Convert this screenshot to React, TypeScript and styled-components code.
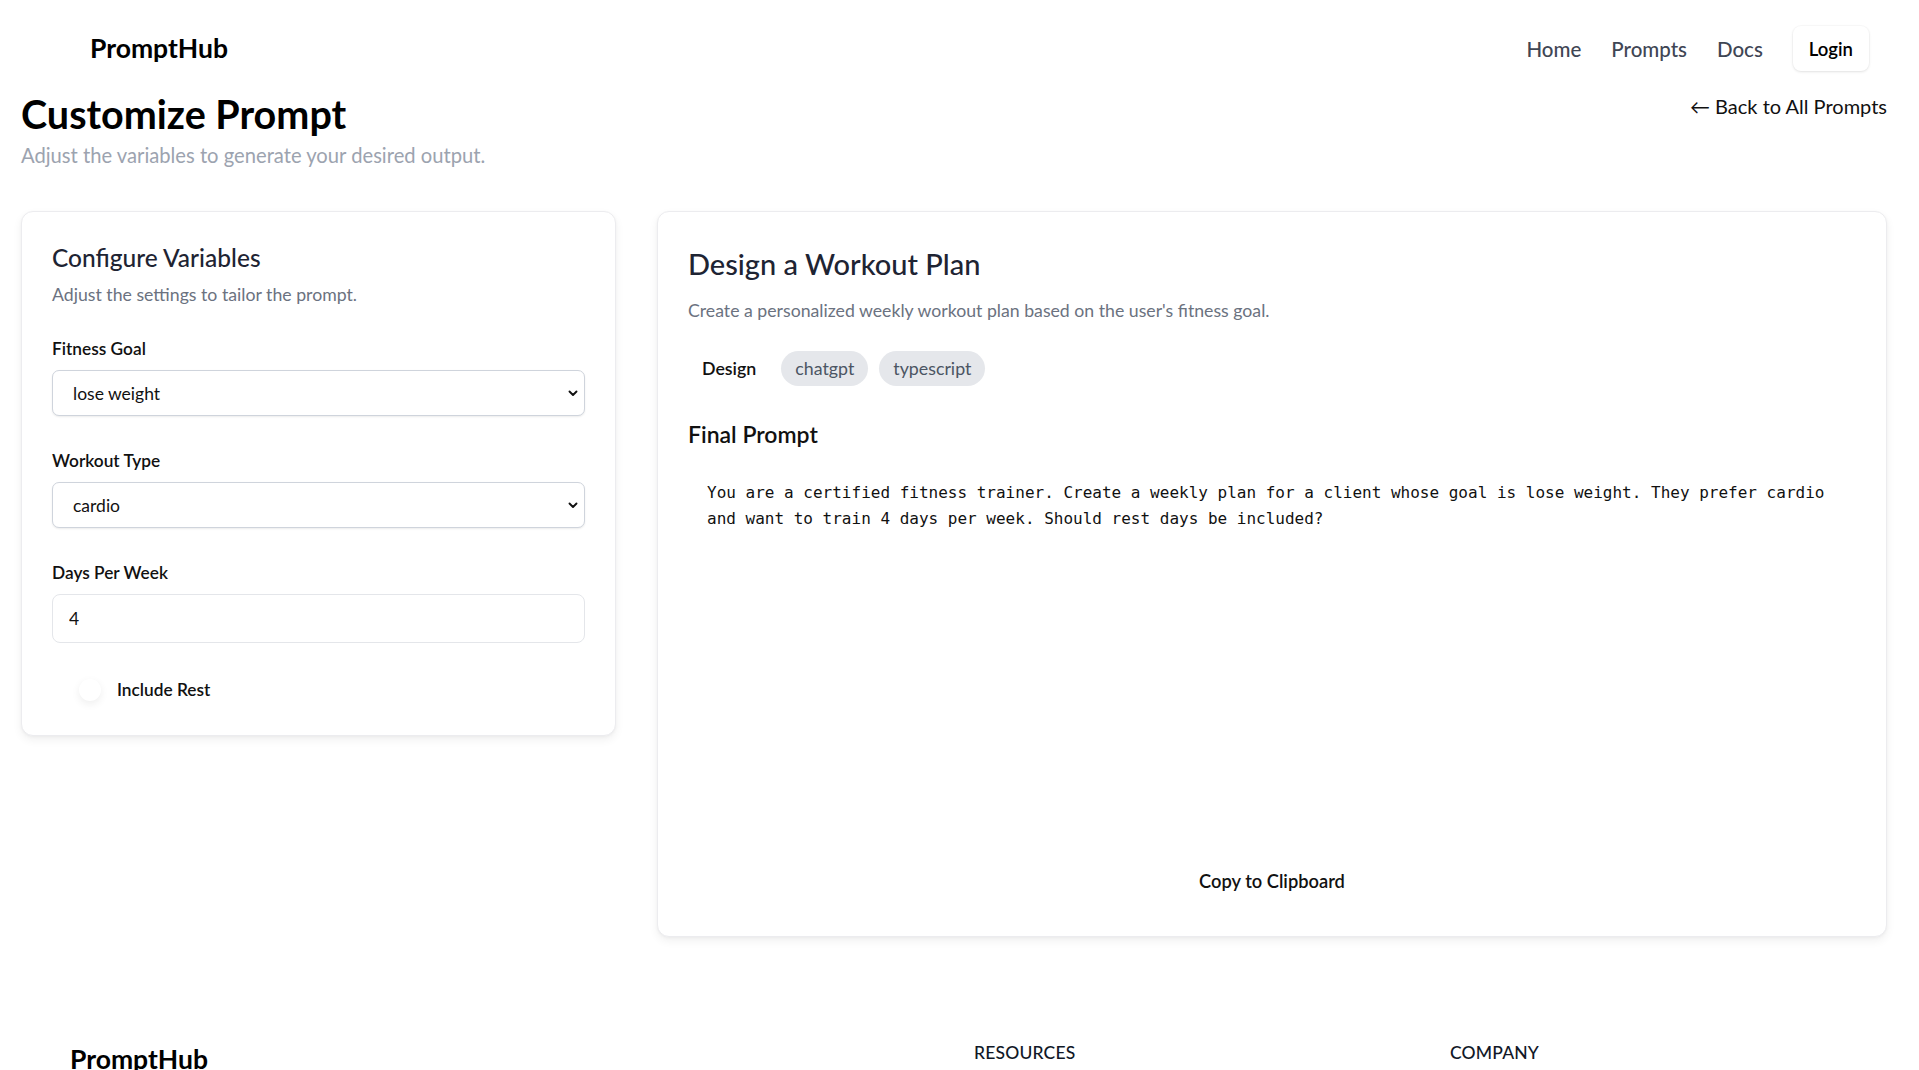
import React, { useState } from "react";
import styled, { createGlobalStyle } from "styled-components";

const Global = createGlobalStyle`
  html, body { margin: 0; padding: 0; background: #ffffff; }
  body { font-family: Lato, "Open Sans", "Noto Sans", sans-serif; color: #111827; }
  * { box-sizing: border-box; }
`;

const Nav = styled.header`
  display: flex;
  align-items: center;
  justify-content: space-between;
  padding: 26px 50px 20px 90px;
`;

const Brand = styled.div<{ $size?: number }>`
  font-size: ${(p) => p.$size ?? 26.5}px;
  font-weight: 700;
  color: #000;
  line-height: 1.25;
`;

const NavLinks = styled.nav`
  display: flex;
  align-items: center;
  gap: 30px;
`;

const NavLink = styled.a`
  font-size: 20.5px;
  font-weight: 500;
  color: #3f4654;
  text-decoration: none;
`;

const LoginButton = styled.button`
  height: 45px;
  padding: 0 16px;
  border: none;
  border-radius: 8px;
  background: #fff;
  box-shadow: 0 1px 3px rgba(0, 0, 0, 0.1), 0 0 0 1px rgba(0, 0, 0, 0.02);
  font-family: inherit;
  font-size: 18.5px;
  font-weight: 600;
  color: #000;
`;

const Main = styled.main`
  padding: 0 32px 62px 21px;
`;

const HeaderRow = styled.div`
  display: flex;
  justify-content: space-between;
  align-items: flex-start;
`;

const PageTitle = styled.h1`
  margin: 0;
  font-size: 39.5px;
  line-height: 46px;
  font-weight: 700;
  color: #000;
`;

const PageSubtitle = styled.p`
  margin: 5px 0 0;
  font-size: 20.2px;
  line-height: 27px;
  color: #9ca3af;
`;

const BackLink = styled.a`
  margin-top: 2px;
  font-size: 20px;
  line-height: 27px;
  color: #111;
  text-decoration: none;
`;

const Grid = styled.div`
  display: grid;
  grid-template-columns: 595px 1fr;
  gap: 41px;
  align-items: start;
  margin-top: 42px;
`;

const Card = styled.section<{ $pb: number }>`
  background: #fff;
  border: 1px solid #ececef;
  border-radius: 12px;
  box-shadow: 0 4px 10px rgba(0, 0, 0, 0.06), 0 1px 3px rgba(0, 0, 0, 0.04);
  padding: 30px 30px ${(p) => p.$pb}px;
  display: flex;
  flex-direction: column;
`;

const CardTitle = styled.h2<{ $size: number; $lh: number }>`
  margin: 0;
  font-size: ${(p) => p.$size}px;
  line-height: ${(p) => p.$lh}px;
  font-weight: 500;
  color: #1e2433;
`;

const CardText = styled.p<{ $mt: number }>`
  margin: ${(p) => p.$mt}px 0 0;
  font-size: 17.7px;
  line-height: 25.5px;
  color: #6b7280;
`;

const Fields = styled.div`
  display: flex;
  flex-direction: column;
  gap: 31.5px;
  margin-top: 28px;
`;

const Field = styled.div`
  display: flex;
  flex-direction: column;
  gap: 9px;
`;

const Label = styled.label`
  font-size: 17.3px;
  line-height: 25.5px;
  font-weight: 600;
  color: #111;
`;

const SelectWrap = styled.div`
  position: relative;
`;

const Select = styled.select`
  width: 100%;
  height: 46px;
  appearance: none;
  padding: 0 40px 0 20px;
  border: 1px solid #cfd4dc;
  border-radius: 7px;
  background: #fff;
  box-shadow: 0 1px 2px rgba(0, 0, 0, 0.08);
  font-family: inherit;
  font-size: 17.5px;
  color: #111;
`;

const Chevron = styled.svg`
  position: absolute;
  right: 6px;
  top: 50%;
  transform: translateY(-50%);
  pointer-events: none;
`;

const TextInput = styled.input`
  width: 100%;
  height: 49px;
  padding: 0 16px;
  border: 1px solid #e4e6ea;
  border-radius: 8px;
  background: #fff;
  font-family: inherit;
  font-size: 17.5px;
  color: #111;
  outline: none;
`;

const SwitchRow = styled.div`
  display: flex;
  align-items: center;
  gap: 16px;
  height: 30px;
  padding-left: 27px;
`;

const SwitchThumb = styled.span`
  width: 22px;
  height: 22px;
  border-radius: 50%;
  background: #fff;
  box-shadow: 0 3px 8px rgba(0, 0, 0, 0.07);
`;

const Tags = styled.div`
  display: flex;
  gap: 11px;
  margin-top: 27px;
`;

const Tag = styled.span<{ $plain?: boolean }>`
  display: inline-flex;
  align-items: center;
  height: 35px;
  padding: 0 14px;
  border-radius: 18px;
  background: ${(p) => (p.$plain ? "transparent" : "#e5e7eb")};
  color: ${(p) => (p.$plain ? "#111" : "#4b5563")};
  font-weight: ${(p) => (p.$plain ? 600 : 400)};
  font-size: 17.8px;
`;

const SectionTitle = styled.h3`
  margin: 33px 0 0;
  font-size: 23px;
  line-height: 30px;
  font-weight: 600;
  color: #111;
`;

const Pre = styled.pre`
  margin: 15px 0 0;
  padding: 16px 19px;
  min-height: 395px;
  font-family: "DejaVu Sans Mono", "Liberation Mono", monospace;
  font-size: 16px;
  line-height: 26px;
  color: #111;
  white-space: pre-wrap;
  word-break: normal;
`;

const CopyButton = styled.button`
  align-self: center;
  height: 44px;
  padding: 0 16px;
  border: none;
  background: transparent;
  font-family: inherit;
  font-size: 18.3px;
  font-weight: 600;
  color: #111;
`;

const Footer = styled.footer`
  padding: 42px 70px 60px;
`;

const FooterGrid = styled.div`
  display: grid;
  grid-template-columns: 856px 428px 428px;
  gap: 48px;
`;

const FooterCol = styled.div<{ $pt?: number }>`
  display: flex;
  flex-direction: column;
  gap: 14px;
  padding-top: ${(p) => p.$pt ?? 0}px;
`;

const FooterHeading = styled.h4`
  margin: 0;
  font-size: 17.5px;
  line-height: 24px;
  font-weight: 500;
  letter-spacing: 0.01em;
  text-transform: uppercase;
  color: #111827;
`;

const FooterLink = styled.a`
  font-size: 15px;
  color: #6b7280;
  text-decoration: none;
`;

const FooterNote = styled.p`
  margin: 0;
  font-size: 15px;
  line-height: 24px;
  color: #6b7280;
  max-width: 380px;
`;

const Copyright = styled.div`
  margin-top: 48px;
  padding-top: 24px;
  border-top: 1px solid #eef0f3;
  font-size: 14px;
  color: #9ca3af;
`;

export default function App() {
  const [goal, setGoal] = useState("lose weight");
  const [type, setType] = useState("cardio");
  const [days, setDays] = useState("4");

  const prompt = `You are a certified fitness trainer. Create a weekly plan for a client whose goal is ${goal}. They prefer ${type} and want to train ${days} days per week. Should rest days be included?`;

  const chevron = (
    <Chevron width="12" height="12" viewBox="0 0 12 12">
      <path d="M2.5 4.5 L6 8 L9.5 4.5" fill="none" stroke="#111" strokeWidth="1.9" strokeLinecap="round" strokeLinejoin="round" />
    </Chevron>
  );

  return (
    <>
      <Global />
      <Nav>
        <Brand>PromptHub</Brand>
        <NavLinks>
          <NavLink href="#">Home</NavLink>
          <NavLink href="#">Prompts</NavLink>
          <NavLink href="#">Docs</NavLink>
          <LoginButton>Login</LoginButton>
        </NavLinks>
      </Nav>
      <Main>
        <HeaderRow>
          <div>
            <PageTitle>Customize Prompt</PageTitle>
            <PageSubtitle>Adjust the variables to generate your desired output.</PageSubtitle>
          </div>
          <BackLink href="#">← Back to All Prompts</BackLink>
        </HeaderRow>
        <Grid>
          <Card $pb={30}>
            <CardTitle $size={24.5} $lh={31}>Configure Variables</CardTitle>
            <CardText $mt={9}>Adjust the settings to tailor the prompt.</CardText>
            <Fields>
              <Field>
                <Label>Fitness Goal</Label>
                <SelectWrap>
                  <Select value={goal} onChange={(e) => setGoal(e.target.value)}>
                    <option>lose weight</option>
                    <option>build muscle</option>
                    <option>improve endurance</option>
                  </Select>
                  {chevron}
                </SelectWrap>
              </Field>
              <Field>
                <Label>Workout Type</Label>
                <SelectWrap>
                  <Select value={type} onChange={(e) => setType(e.target.value)}>
                    <option>cardio</option>
                    <option>strength</option>
                    <option>yoga</option>
                  </Select>
                  {chevron}
                </SelectWrap>
              </Field>
              <Field>
                <Label>Days Per Week</Label>
                <TextInput value={days} onChange={(e) => setDays(e.target.value)} />
              </Field>
              <SwitchRow>
                <SwitchThumb />
                <Label>Include Rest</Label>
              </SwitchRow>
            </Fields>
          </Card>
          <Card $pb={33}>
            <CardTitle $size={29} $lh={43}>Design a Workout Plan</CardTitle>
            <CardText $mt={13}>Create a personalized weekly workout plan based on the user's fitness goal.</CardText>
            <Tags>
              <Tag $plain>Design</Tag>
              <Tag>chatgpt</Tag>
              <Tag>typescript</Tag>
            </Tags>
            <SectionTitle>Final Prompt</SectionTitle>
            <Pre>{prompt}</Pre>
            <CopyButton>Copy to Clipboard</CopyButton>
          </Card>
        </Grid>
      </Main>
      <Footer>
        <FooterGrid>
          <FooterCol $pt={2}>
            <Brand>PromptHub</Brand>
            <FooterNote>Discover, customize and share AI prompts for every workflow.</FooterNote>
          </FooterCol>
          <FooterCol>
            <FooterHeading>Resources</FooterHeading>
            <FooterLink href="#">Docs</FooterLink>
            <FooterLink href="#">Prompts</FooterLink>
            <FooterLink href="#">API</FooterLink>
          </FooterCol>
          <FooterCol>
            <FooterHeading>Company</FooterHeading>
            <FooterLink href="#">About</FooterLink>
            <FooterLink href="#">Blog</FooterLink>
            <FooterLink href="#">Contact</FooterLink>
          </FooterCol>
        </FooterGrid>
        <Copyright>© 2025 PromptHub. All rights reserved.</Copyright>
      </Footer>
    </>
  );
}
